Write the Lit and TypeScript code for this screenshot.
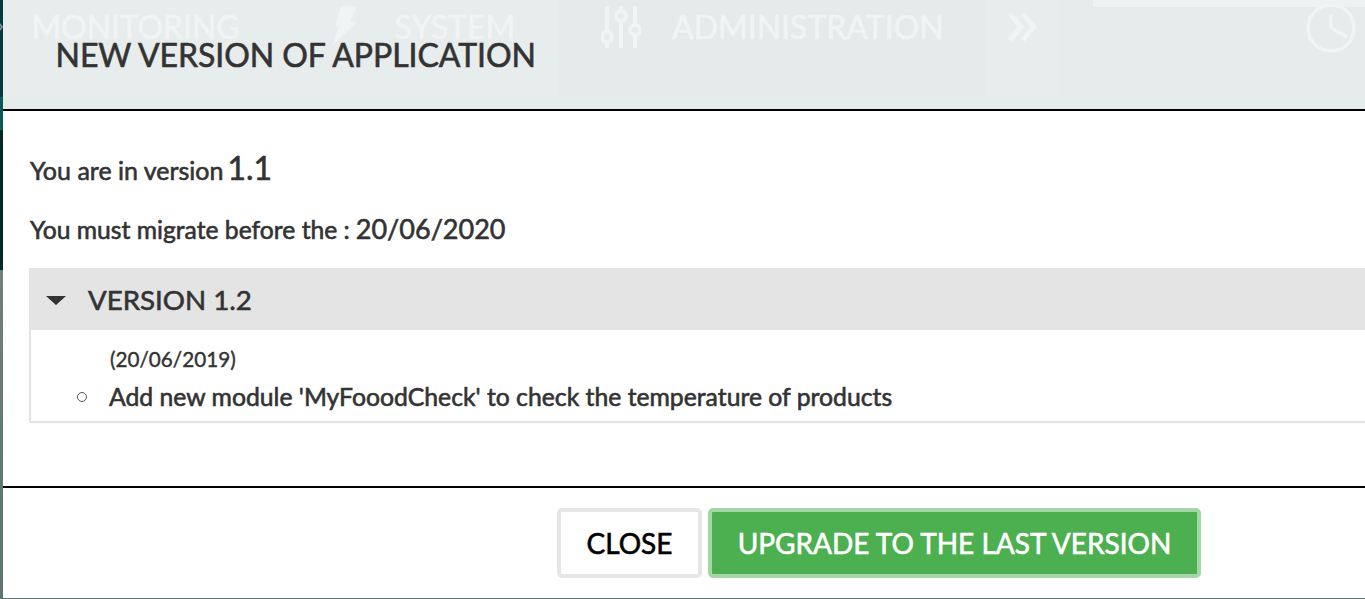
import { LitElement, html, css } from "lit";
import { customElement } from "lit/decorators.js";

@customElement("app-root")
export class AppRoot extends LitElement {
  static styles = css`
    :host { display: block; width: 1365px; height: 599px; overflow: hidden; font-family: "Lato", sans-serif; color: #333; background: #61736e; }
    .page { display: grid; grid-template-columns: 3px 1fr; height: 598px; }
    .strip { background: linear-gradient(#073a3e 0, #073a3e 97px, #0a5a58 97px, #0a5a58 130px, #032a28 130px, #032a28 270px, #6d8078 270px, #5f7370 100%); }
    .strip svg { display: block; margin-top: 21px; }
    .modal { background: #fff; display: flex; flex-direction: column; min-width: 0; }
    .head { display: grid; flex: none; border-bottom: 2px solid #000; background: #e4edeb; height: 109px; overflow: hidden; }
    .head > * { grid-area: 1 / 1; }
    .nav { display: flex; height: 97px; background: #e7ecec; color: #f1f4f4; font-size: 32px; line-height: 54px; -webkit-text-stroke: 0.7px #f1f4f4; }
    .nav-item { display: flex; align-items: flex-start; box-sizing: border-box; }
    .mon { width: 205px; padding-left: 28.5px; letter-spacing: -0.1px; }
    .sys { width: 350px; gap: 36px; padding-left: 122.5px; }
    .adm { width: 427px; gap: 31px; padding-left: 43px; background: #e6eaea; }
    .more { width: 73px; padding: 12px 0 0 23px; background: #e8ecec; }
    .right { flex: 1; display: flex; flex-direction: column; align-items: flex-end; background: #e7ebeb; }
    .topbar { height: 7px; width: 272px; background: #f0f2f1; flex: none; }
    .clock { margin: -4px 9px 0 0; }
    .title { margin: 0; padding: 36px 0 0 52.5px; font-size: 32px; font-weight: 400; line-height: 38px; letter-spacing: -0.05px; color: #333; -webkit-text-stroke: 0.6px #333; }
    .body { flex: 1; padding: 0 0 0 27px; }
    .line { margin: 0; color: #333; display: flex; align-items: baseline; -webkit-text-stroke: 0.6px #333; }
    .v { padding-top: 40px; line-height: 34px; height: 34px; font-size: 25px; gap: 4px; }
    .v b { font-size: 32px; font-weight: 400; }
    .m { padding-top: 27px; line-height: 34px; height: 34px; font-size: 24.7px; gap: 6px; }
    .m b { font-size: 27px; font-weight: 400; }
    .acc { margin: 22px 0 0 -1px; border: 2px solid #e4e4e4; border-right: 0; height: 155px; box-sizing: border-box; }
    .acc-head { display: flex; align-items: center; height: 60px; box-sizing: border-box; padding: 0 0 2px 15px; background: #e4e4e4; font-size: 27.7px; gap: 22px; -webkit-text-stroke: 0.6px #333; }
    .caret { width: 0; height: 0; margin-top: 2px; border-left: 10px solid transparent; border-right: 10px solid transparent; border-top: 9px solid #333; }
    .date { margin: 0; padding: 16px 0 0 79px; font-size: 20.7px; line-height: 26px; -webkit-text-stroke: 0.4px #333; }
    ul { margin: 8px 0 0; padding: 0 0 0 78px; list-style: none; font-size: 24.75px; line-height: 34px; -webkit-text-stroke: 0.6px #333; }
    li { display: flex; align-items: center; }
    li::before { content: ""; flex: none; width: 10px; height: 10px; box-sizing: border-box; border: 1.5px solid #555; border-radius: 50%; margin: 0 22px 0 -32px; }
    .foot { flex: none; height: 112px; border-top: 2px solid #000; display: flex; gap: 6px; padding: 20px 0 0 554px; box-sizing: border-box; }
    button { font: inherit; font-size: 28px; height: 70px; border-radius: 5px; box-sizing: border-box; padding: 0; }
    .close { width: 145px; background: #fff; border: 4px solid #e6e6e6; color: #000; -webkit-text-stroke: 0.6px #000; }
    .up { width: 493px; background: #4caf50; border: 4px solid #a5d6a7; color: #fff; -webkit-text-stroke: 0.6px #fff; }
  `;

  render() {
    return html`
      <div class="page">
        <div class="strip">
          <svg width="3" height="12" viewBox="0 0 3 12" fill="none" stroke="#7d8f8c" stroke-width="2"><path d="M-2 1l4 5-4 5"/></svg>
        </div>
        <div class="modal">
          <header class="head">
            <div class="nav">
              <div class="nav-item mon">MONITORING</div>
              <div class="nav-item sys">
                <svg width="28" height="54" viewBox="0 0 28 54"><path d="M10 6h16l-7 16h7L1 46l7-20H4z" fill="currentColor"/></svg>
                <span>SYSTEM</span>
              </div>
              <div class="nav-item adm">
                <svg width="40" height="54" viewBox="0 0 40 54" fill="none" stroke="currentColor" stroke-width="4"><path d="M6 6v26M6 42v6M20 6v5M20 21v27M34 6v19M34 35v13"/><circle cx="6" cy="37" r="5"/><circle cx="20" cy="16" r="5"/><circle cx="34" cy="30" r="5"/></svg>
                <span>ADMINISTRATION</span>
              </div>
              <div class="nav-item more">
                <svg width="30" height="30" viewBox="0 0 30 30" fill="none" stroke="currentColor" stroke-width="5"><path d="M2 2l11 13L2 28M15 2l11 13-11 13"/></svg>
              </div>
              <div class="right">
                <div class="topbar"></div>
                <svg class="clock" width="50" height="50" viewBox="0 0 50 50" fill="none" stroke="currentColor" stroke-width="3.5"><circle cx="25" cy="25" r="23"/><path d="M25 12v13l16 9"/></svg>
              </div>
            </div>
            <h1 class="title">NEW VERSION OF APPLICATION</h1>
          </header>
          <main class="body">
            <p class="line v">You are in version <b>1.1</b></p>
            <p class="line m">You must migrate before the : <b>20/06/2020</b></p>
            <section class="acc">
              <div class="acc-head"><span class="caret"></span><span>VERSION 1.2</span></div>
              <p class="date">(20/06/2019)</p>
              <ul><li>Add new module 'MyFooodCheck' to check the temperature of products</li></ul>
            </section>
          </main>
          <footer class="foot">
            <button class="close">CLOSE</button>
            <button class="up">UPGRADE TO THE LAST VERSION</button>
          </footer>
        </div>
      </div>
    `;
  }
}
